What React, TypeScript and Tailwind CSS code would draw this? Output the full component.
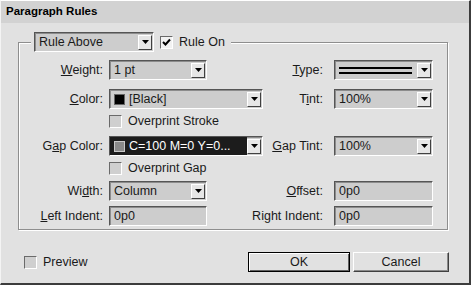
import React from 'react';

const sunken =
  'border-t border-l border-b border-r border-t-[#555] border-l-[#555] border-b-white border-r-white shadow-[inset_1px_1px_0_#8c8c8c]';

function Arrow() {
  return (
    <div className="w-[14px] h-[15px] mr-[1px] shrink-0 bg-[#e6e6e6] border-t border-l border-t-white border-l-white border-b border-r border-b-[#404040] border-r-[#404040] flex items-center justify-center">
      <svg width="7" height="4" viewBox="0 0 7 4">
        <path d="M0 0h7L3.5 4z" fill="#000" />
      </svg>
    </div>
  );
}

function Select({ w, children, dark }: { w: string; children: React.ReactNode; dark?: boolean }) {
  return (
    <div className={`${w} h-[20px] shrink-0 flex items-center bg-[#cdcdcd] ${sunken}`}>
      <div className={`flex-1 h-full flex items-center pl-[4px] overflow-hidden whitespace-nowrap ${dark ? 'bg-[#1c1c1c] text-white' : ''}`}>
        {children}
      </div>
      <Arrow />
    </div>
  );
}

function Field({ w, value }: { w: string; value: string }) {
  return (
    <div className={`${w} h-[20px] shrink-0 flex items-center pl-[4px] bg-[#cdcdcd] ${sunken}`}>{value}</div>
  );
}

function Check({ checked }: { checked?: boolean }) {
  return (
    <div className={`w-[13px] h-[13px] shrink-0 ${checked ? 'bg-[#f2f2f2]' : 'bg-[#cfcfcf]'} border-t border-l border-t-[#6a6a6a] border-l-[#6a6a6a] border-b border-r border-b-white border-r-white flex items-center justify-center`}>
      {checked && (
        <svg width="9" height="9" viewBox="0 0 9 9">
          <path d="M1 4l2.5 2.5L8 1.5" stroke="#000" strokeWidth="2" fill="none" />
        </svg>
      )}
    </div>
  );
}

function Label({ children, w }: { children: React.ReactNode; w?: string }) {
  return <div className={`${w ?? ''} text-right whitespace-nowrap shrink-0`}>{children}</div>;
}

export default function App() {
  return (
    <div className="w-[471px] h-[285px] overflow-hidden bg-[#e1e1e1] border-t border-l border-t-white border-l-[#f4f4f4] border-b-2 border-r-2 border-b-[#3c3c3c] border-r-[#3c3c3c] text-[12.5px] text-[#1a1a1a] font-['Liberation_Sans',Arial,sans-serif]">
      {/* Title */}
      <div className="h-[22px] bg-[#d2d2d2] pl-[5px] flex items-center font-bold text-[11.5px] text-black">Paragraph Rules</div>

      {/* Group box */}
      <div className="relative ml-[17px] mt-[19px] w-[430px] h-[188px] border border-[#8e8e8e] shadow-[1px_1px_0_#fff,inset_1px_1px_0_#fff] pt-[17px] pr-[14px]">
        <div className="absolute left-[12px] top-[-11px] bg-[#e1e1e1] px-[3px] pr-[6px] flex items-center gap-[6px]">
          <Select w="w-[120px]">Rule Above</Select>
          <Check checked />
          <span>Rule On</span>
        </div>

        <div className="flex items-center h-[20px]">
          <Label w="w-[84px]"><u>W</u>eight:</Label>
          <div className="ml-[6px]"><Select w="w-[98px]">1 pt</Select></div>
          <div className="flex-1" />
          <Label><u>T</u>ype:</Label>
          <div className="ml-[11px] w-[99px] h-[20px] shrink-0 flex items-center bg-[#cdcdcd] border-t border-l border-b border-r border-t-[#555] border-l-[#555] border-b-white border-r-white shadow-[inset_1px_1px_0_#8c8c8c]">
            <div className="flex-1 h-full flex flex-col justify-center gap-[3px] pl-[4px] pr-[5px]">
              <div className="h-[2px] bg-black" />
              <div className="h-[2px] bg-black" />
            </div>
            <Arrow />
          </div>
        </div>

        <div className="flex items-center h-[20px] mt-[9px]">
          <Label w="w-[84px]"><u>C</u>olor:</Label>
          <div className="ml-[6px]">
            <Select w="w-[154px]">
              <span className="w-[11px] h-[11px] bg-black border border-[#666] mr-[4px]" />[Black]
            </Select>
          </div>
          <div className="flex-1" />
          <Label>T<u>i</u>nt:</Label>
          <div className="ml-[11px]"><Select w="w-[99px]">100%</Select></div>
        </div>

        <div className="flex items-center h-[13px] mt-[6px] pl-[90px] gap-[6px]">
          <Check />
          <span>Overprint Stroke</span>
        </div>

        <div className="flex items-center h-[20px] mt-[8px]">
          <Label w="w-[84px]">G<u>a</u>p Color:</Label>
          <div className="ml-[6px]">
            <Select w="w-[154px]" dark>
              <span className="w-[11px] h-[11px] bg-[#8a8a8a] border border-[#c8c8c8] mr-[4px]" />C=100 M=0 Y=0...
            </Select>
          </div>
          <div className="flex-1" />
          <Label><u>G</u>ap Tint:</Label>
          <div className="ml-[11px]"><Select w="w-[99px]">100%</Select></div>
        </div>

        <div className="flex items-center h-[13px] mt-[6px] pl-[90px] gap-[6px]">
          <Check />
          <span>Overprint Gap</span>
        </div>

        <div className="flex items-center h-[20px] mt-[6px]">
          <Label w="w-[84px]">Wi<u>d</u>th:</Label>
          <div className="ml-[6px]"><Select w="w-[98px]">Column</Select></div>
          <div className="flex-1" />
          <Label><u>O</u>ffset:</Label>
          <div className="ml-[11px]"><Field w="w-[99px]" value="0p0" /></div>
        </div>

        <div className="flex items-center h-[20px] mt-[5px]">
          <Label w="w-[84px]"><u>L</u>eft Indent:</Label>
          <div className="ml-[6px]"><Field w="w-[98px]" value="0p0" /></div>
          <div className="flex-1" />
          <Label>Ri<u>g</u>ht Indent:</Label>
          <div className="ml-[11px]"><Field w="w-[99px]" value="0p0" /></div>
        </div>
      </div>

      {/* Footer */}
      <div className="flex items-center mt-[22px] h-[20px]">
        <div className="ml-[23px] flex items-center gap-[6px]">
          <Check />
          <span>Preview</span>
        </div>
        <div className="ml-auto mr-[20px] flex items-center gap-[3px]">
          <div className="w-[102px] h-[20px] border border-black bg-[#e1e1e1] flex items-center justify-center shadow-[inset_1px_1px_0_#fff,inset_-1px_-1px_0_#606060]">OK</div>
          <div className="w-[96px] h-[20px] bg-[#e1e1e1] border-t border-l border-t-white border-l-white border-b border-r border-b-[#404040] border-r-[#404040] shadow-[inset_-1px_-1px_0_#8a8a8a] flex items-center justify-center">Cancel</div>
        </div>
      </div>
    </div>
  );
}
